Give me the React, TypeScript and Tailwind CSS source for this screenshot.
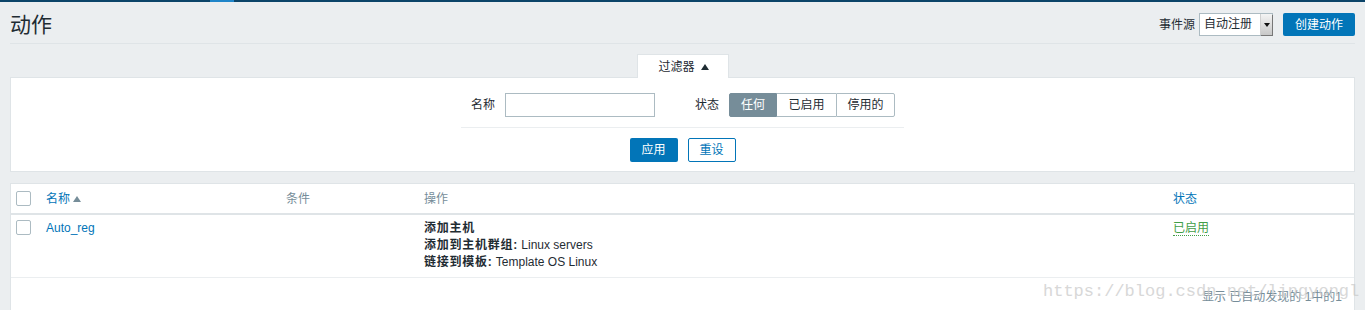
import React from "react";

const font = { fontFamily: '"Liberation Sans", Arial, "Noto Sans CJK SC", sans-serif' };

const Checkbox = () => (
  <span className="block w-[15px] h-[15px] border border-[#acbbc2] bg-white rounded-[2px]" />
);

const Triangle = ({ color }: { color: string }) => (
  <svg width="8" height="6" viewBox="0 0 8 6" className="inline-block">
    <polygon points="4,0 8,6 0,6" fill={color} />
  </svg>
);

export default function App() {
  return (
    <div className="relative min-h-[310px] bg-[#ebeef0] text-[12px] text-[#1f2c33] overflow-hidden" style={font}>
      {/* top nav strip */}
      <div className="flex h-[2px] bg-[#0b4469]">
        <div className="w-[210px]" />
        <div className="w-[24px] bg-[#1f85c9]" />
      </div>

      {/* header */}
      <div className="mx-[10px] flex items-center justify-between h-[42px] pt-[4px] border-b border-[#dfe4e7]">
        <h1 className="text-[21px] leading-none text-[#1f2c33]">动作</h1>
        <div className="flex items-center">
          <span className="mr-[4px]">事件源</span>
          <div className="flex h-[23px] w-[74px] border border-[#acbbc2] bg-white">
            <span className="flex-1 pl-[4px] leading-[21px]">自动注册</span>
            <span className="w-[12px] flex items-center justify-center bg-gradient-to-b from-[#f4f4f4] to-[#c8c8c8] border-l border-[#d0d0d0] shadow-[1px_1px_0_#777]">
              <svg width="6" height="4" viewBox="0 0 6 4">
                <polygon points="0,0 6,0 3,4" fill="#111" />
              </svg>
            </span>
          </div>
          <button className="ml-[10px] h-[23px] w-[72px] bg-[#0275b8] text-white rounded-[2px]">创建动作</button>
        </div>
      </div>

      {/* filter */}
      <div className="mx-[10px] mt-[10px]">
        <div className="flex justify-center">
          <div className="w-[92px] h-[24px] bg-white border border-b-0 border-[#dfe4e7] flex items-center justify-center gap-[6px] pl-[2px] -mb-px relative">
            <span>过滤器</span>
            <Triangle color="#1f2c33" />
          </div>
        </div>
        <div className="bg-white border border-[#dfe4e7] h-[95px] flex flex-col items-center pt-[15px]">
          <div className="w-[443px] flex items-center pb-[10px] border-b border-[#ebeef0]">
            <span className="w-[34px] text-right mr-[10px] shrink-0">名称</span>
            <div className="w-[150px] h-[24px] border border-[#acbbc2] bg-white" />
            <span className="w-[74px] text-right pr-[10px] shrink-0">状态</span>
            <div className="flex h-[24px]">
              <span className="w-[48px] bg-[#768d99] text-white flex items-center justify-center border border-[#768d99] rounded-l-[2px]">任何</span>
              <span className="w-[59px] flex items-center justify-center border-y border-[#acbbc2]">已启用</span>
              <span className="w-[59px] flex items-center justify-center border border-[#acbbc2] rounded-r-[2px]">停用的</span>
            </div>
          </div>
          <div className="flex gap-[10px] mt-[10px]">
            <button className="w-[48px] h-[24px] bg-[#0275b8] text-white rounded-[2px]">应用</button>
            <button className="w-[48px] h-[24px] bg-white text-[#0275b8] border border-[#0275b8] rounded-[2px]">重设</button>
          </div>
        </div>
      </div>

      {/* table */}
      <div className="mx-[10px] mt-[11px] bg-white border border-[#dfe4e7] border-b-0 min-h-[140px]">
        <table className="w-full table-fixed border-collapse">
          <colgroup>
            <col className="w-[29px]" />
            <col className="w-[240px]" />
            <col className="w-[138px]" />
            <col className="w-[749px]" />
            <col />
          </colgroup>
          <thead>
            <tr className="h-[30px] border-b-2 border-[#dfe4e7] text-left">
              <th className="pl-[5px] font-normal align-middle"><Checkbox /></th>
              <th className="pl-[6px] font-normal text-[#0275b8]">
                <span className="inline-flex items-center gap-[3px]">名称 <Triangle color="#768d99" /></span>
              </th>
              <th className="pl-[6px] font-normal text-[#768d99]">条件</th>
              <th className="pl-[6px] font-normal text-[#768d99]">操作</th>
              <th className="pl-[6px] font-normal text-[#0275b8]">状态</th>
            </tr>
          </thead>
          <tbody>
            <tr className="border-b border-[#ebeef0] align-top">
              <td className="pl-[5px] pt-[5px]"><Checkbox /></td>
              <td className="pl-[6px] pt-[5px] leading-[17px] text-[#0275b8]">Auto_reg</td>
              <td />
              <td className="pl-[6px] pt-[5px] pb-[6px] leading-[17px]">
                <div className="font-bold tracking-[0.75px]">添加主机</div>
                <div><b className="tracking-[0.75px]">添加到主机群组:</b> Linux servers</div>
                <div><b className="tracking-[0.75px]">链接到模板:</b> Template OS Linux</div>
              </td>
              <td className="pl-[6px] pt-[5px] leading-[17px]">
                <span className="text-[#429e47] border-b border-dotted border-[#429e47]">已启用</span>
              </td>
            </tr>
          </tbody>
        </table>
        <div className="text-right pr-[12px] pt-[10px] text-[#768d99]">显示 已自动发现的 1中的1</div>
      </div>

      {/* watermark */}
      <div
        className="absolute left-[1043px] top-[279px] text-[17px] text-[#c8c8c8] opacity-70 whitespace-nowrap pointer-events-none"
        style={{ fontFamily: '"Liberation Mono", "DejaVu Sans Mono", monospace' }}
      >
        https://blog.csdn.net/lingyongl
      </div>
    </div>
  );
}
